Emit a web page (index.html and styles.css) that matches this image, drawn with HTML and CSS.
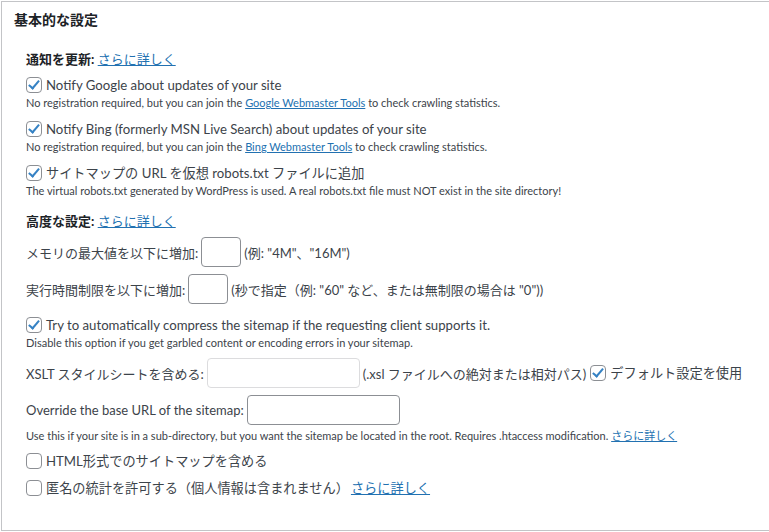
FILE: index.html
```html
<!DOCTYPE html>
<html lang="ja">
<head>
  <meta charset="UTF-8">
  <title>基本的な設定</title>
  <link rel="stylesheet" href="styles.css">
</head>
<body>
  <div class="postbox">
    <h2 class="hndle">基本的な設定</h2>
    <div class="inside">
      <p class="sec"><b>通知を更新:</b> <a href="#">さらに詳しく</a></p>

      <div class="opt">
        <label class="chk"><span class="box on"></span>Notify Google about updates of your site</label>
        <small>No registration required, but you can join the <a href="#">Google Webmaster Tools</a> to check crawling statistics.</small>
      </div>
      <div class="opt">
        <label class="chk"><span class="box on"></span>Notify Bing (formerly MSN Live Search) about updates of your site</label>
        <small>No registration required, but you can join the <a href="#">Bing Webmaster Tools</a> to check crawling statistics.</small>
      </div>
      <div class="opt">
        <label class="chk"><span class="box on"></span>サイトマップの URL を仮想 robots.txt ファイルに追加</label>
        <small>The virtual robots.txt generated by WordPress is used. A real robots.txt file must NOT exist in the site directory!</small>
      </div>

      <p class="sec sec2"><b>高度な設定:</b> <a href="#">さらに詳しく</a></p>

      <div class="field">メモリの最大値を以下に増加:<span class="inp small"></span>(例: "4M"、"16M")</div>
      <div class="field">実行時間制限を以下に増加:<span class="inp small"></span>(秒で指定（例: "60" など、または無制限の場合は "0"))</div>

      <div class="opt opt-gz">
        <label class="chk"><span class="box on"></span>Try to automatically compress the sitemap if the requesting client supports it.</label>
        <small>Disable this option if you get garbled content or encoding errors in your sitemap.</small>
      </div>

      <div class="field">XSLT スタイルシートを含める:<span class="inp wide off"></span>(.xsl ファイルへの絶対または相対パス)<label class="chk inline"><span class="box on"></span>デフォルト設定を使用</label></div>
      <div class="field">Override the base URL of the sitemap:<span class="inp wide"></span></div>
      <small class="note">Use this if your site is in a sub-directory, but you want the sitemap be located in the root. Requires .htaccess modification. <a href="#">さらに詳しく</a></small>

      <label class="chk row"><span class="box"></span>HTML形式でのサイトマップを含める</label>
      <label class="chk row"><span class="box"></span>匿名の統計を許可する（個人情報は含まれません）<a href="#" class="more">さらに詳しく</a></label>
    </div>
  </div>
</body>
</html>
```

FILE: styles.css
```css
body {
  margin: 0;
  background: #fff;
  font-family: Lato, "Noto Sans CJK JP", sans-serif;
  font-size: 13px;
  color: #3c434a;
}
a {
  color: #2271b1;
}
.postbox {
  margin: 1px 0 0 1px;
  height: 528px;
  border: 1px solid #c3c4c7;
  border-right: none;
  background: #fff;
}
.hndle {
  margin: 0;
  padding: 8px 12px 0;
  font-size: 14px;
  line-height: 20px;
  color: #1d2327;
}
.inside {
  padding: 19px 24px 0;
  white-space: nowrap;
}
.sec {
  margin: 0;
  line-height: 20px;
  color: #1d2327;
}
.sec2 {
  margin-top: 12px;
}
.opt {
  margin-top: 6px;
}
.opt + .opt {
  margin-top: 8px;
}
.opt-gz {
  margin-top: 11px;
}
.chk {
  display: flex;
  align-items: center;
  line-height: 20px;
  font-size: 13.2px;
}
.box {
  width: 14px;
  height: 14px;
  border: 1px solid #8c8f94;
  border-radius: 4px;
  margin-right: 4px;
  flex: none;
  position: relative;
}
.box.on::after {
  content: "";
  position: absolute;
  left: 4px;
  top: 0px;
  width: 4px;
  height: 9px;
  border: solid #3582c4;
  border-width: 0 2.5px 2.5px 0;
  transform: rotate(40deg);
}
small {
  display: block;
  font-size: 11px;
  line-height: 16px;
}
.field {
  display: flex;
  align-items: center;
  margin-top: 6px;
  height: 30px;
}
.field + .field {
  margin-top: 7px;
}
.opt + .field {
  margin-top: 7px;
}
.inp {
  flex: none;
  height: 28px;
  border: 1px solid #8c8f94;
  border-radius: 4px;
  margin: 0 3px;
  background: #fff;
}
.inp.small {
  width: 38px;
}
.inp.wide {
  width: 151px;
}
.inp.off {
  border-color: #dcdcde;
}
.chk.inline {
  margin-left: 4px;
}
.note {
  margin-top: 3px;
}
.row {
  margin-top: 7px;
}
.more {
  margin-left: 2px;
}
```
